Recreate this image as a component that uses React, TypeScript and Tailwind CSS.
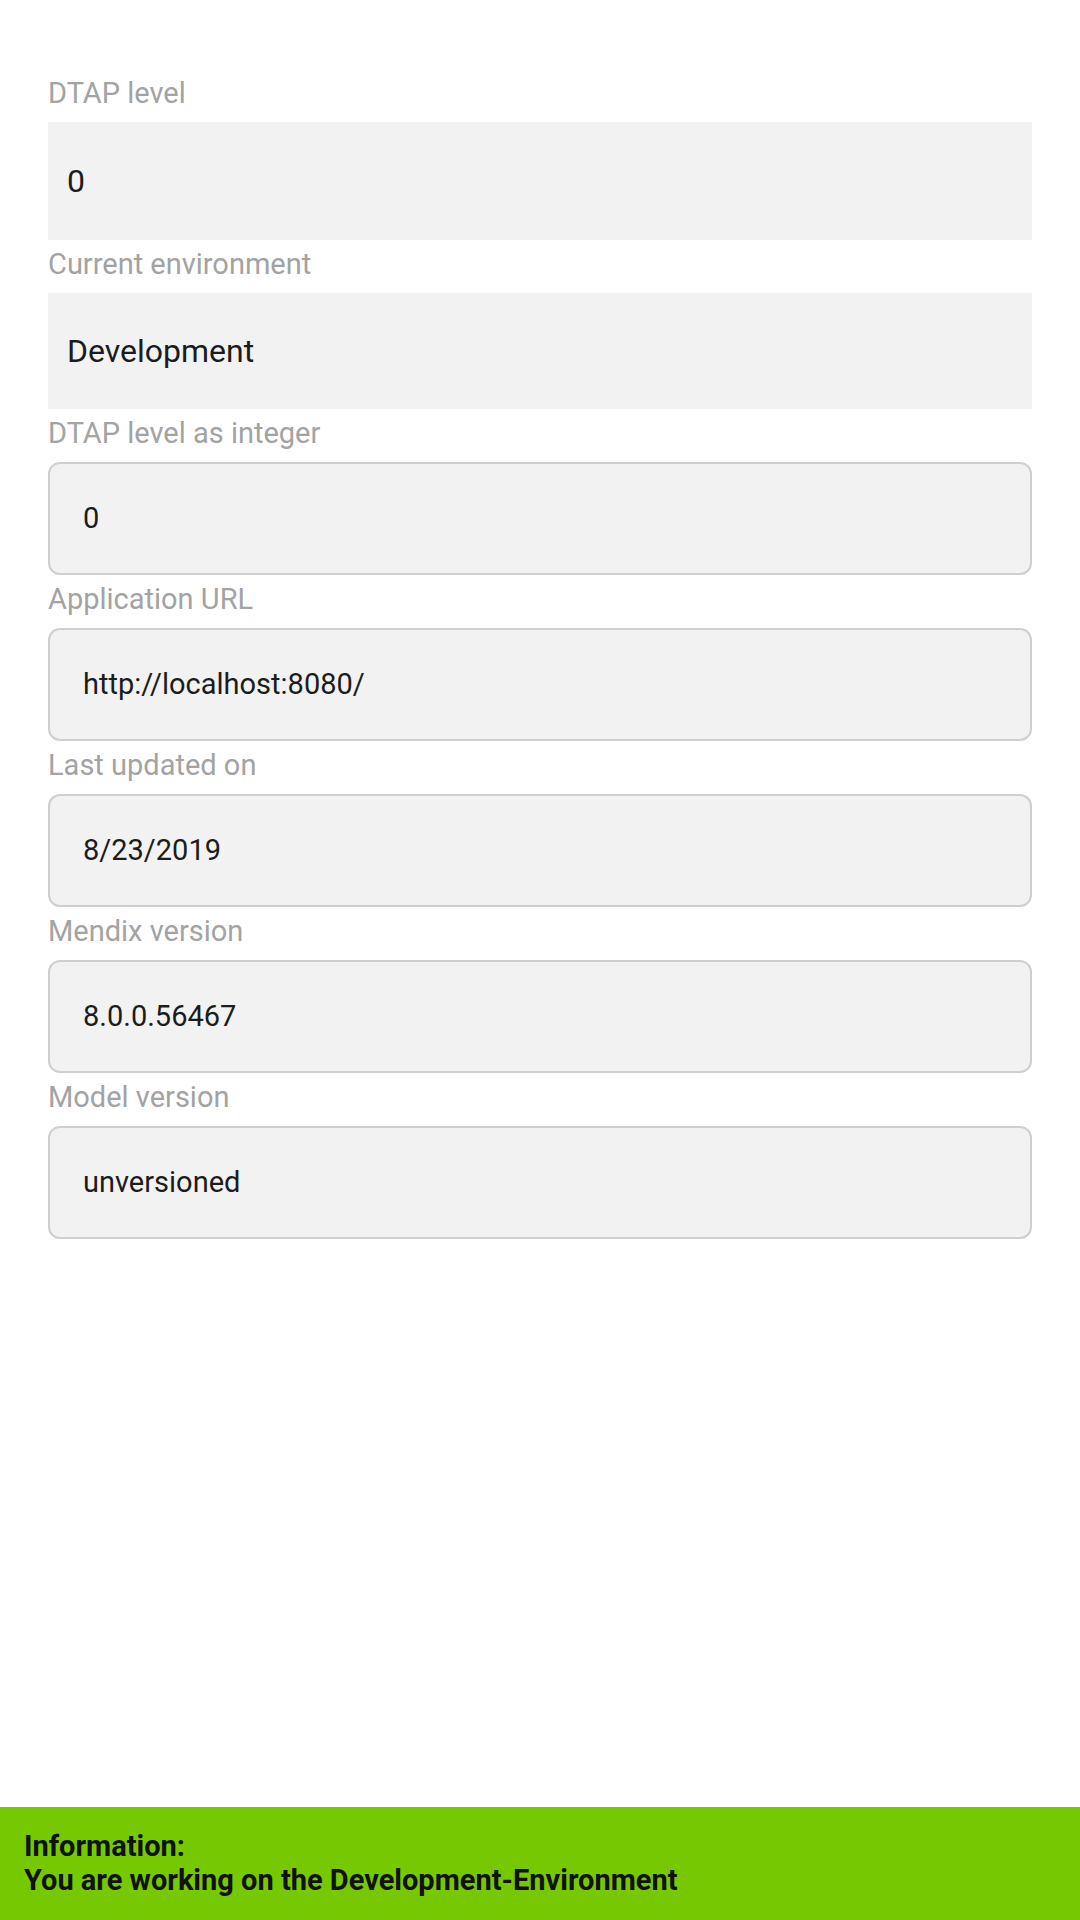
import React from 'react';

type Field = { label: string; value: string; boxed: boolean };

const fields: Field[] = [
  { label: 'DTAP level', value: '0', boxed: false },
  { label: 'Current environment', value: 'Development', boxed: false },
  { label: 'DTAP level as integer', value: '0', boxed: true },
  { label: 'Application URL', value: 'http://localhost:8080/', boxed: true },
  { label: 'Last updated on', value: '8/23/2019', boxed: true },
  { label: 'Mendix version', value: '8.0.0.56467', boxed: true },
  { label: 'Model version', value: 'unversioned', boxed: true },
];

export default function App() {
  return (
    <div className="min-h-[1920px] w-[1080px] bg-white flex flex-col font-['Roboto',sans-serif]">
      <div className="px-[48px] pt-[69px] flex flex-col">
        {fields.map((f, idx) => (
          <FieldRow key={`field-${idx}`} field={f} index={idx} />
        ))}
      </div>

      <div className="mt-auto h-[113px] bg-[#76c900] px-[24px] pt-[22px]">
        <p className="text-[29px] leading-[34px] font-bold text-[#111]">Information:</p>
        <p className="text-[29px] leading-[34px] font-bold text-[#111]">You are working on the Development-Environment</p>
      </div>
    </div>
  );
}

function FieldRow({ field, index }: { field: Field; index: number }) {
  return (
    <div className="flex flex-col">
      <span className="pt-[8px] pb-[13px] text-[29px] leading-[32px] text-[#a3a3a3]">{field.label}</span>
      {field.boxed ? (
        <div className="h-[113px] flex items-center bg-[#f2f2f2] border-2 border-[#cfcfcf] rounded-[12px] pl-[33px]">
          <span className="text-[29px] text-[#1c1c1c]">{field.value}</span>
        </div>
      ) : (
        <div className={`${index === 0 ? 'h-[118px]' : 'h-[116px]'} flex items-center bg-[#f2f2f2] pl-[19px]`}>
          <span className="text-[32px] text-[#1c1c1c]">{field.value}</span>
        </div>
      )}
    </div>
  );
}
